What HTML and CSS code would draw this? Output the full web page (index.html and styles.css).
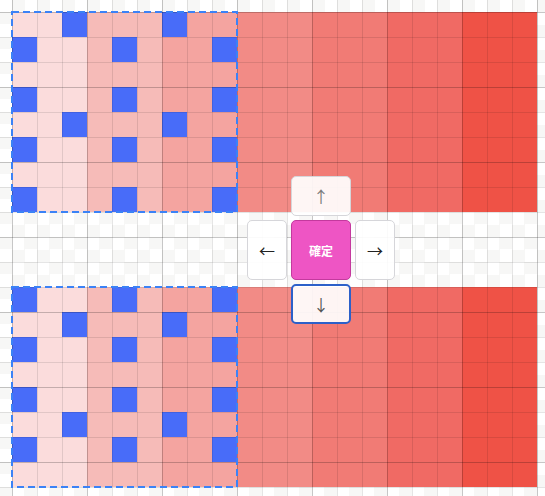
FILE: index.html
```html
<!DOCTYPE html>
<html lang="ja">
<head>
<meta charset="utf-8">
<title>Grid</title>
<link rel="stylesheet" href="styles.css">
</head>
<body>
<div class="canvas">
  <div class="block">
    <div class="b r1 k3"></div><div class="b r1 k7"></div>
    <div class="b r2 k1"></div><div class="b r2 k5"></div><div class="b r2 k9"></div>
    <div class="b r4 k1"></div><div class="b r4 k5"></div><div class="b r4 k9"></div>
    <div class="b r5 k3"></div><div class="b r5 k7"></div>
    <div class="b r6 k1"></div><div class="b r6 k5"></div><div class="b r6 k9"></div>
    <div class="b r8 k1"></div><div class="b r8 k5"></div><div class="b r8 k9"></div>
  </div>
  <div class="block">
    <div class="b r1 k1"></div><div class="b r1 k5"></div><div class="b r1 k9"></div>
    <div class="b r2 k3"></div><div class="b r2 k7"></div>
    <div class="b r3 k1"></div><div class="b r3 k5"></div><div class="b r3 k9"></div>
    <div class="b r5 k1"></div><div class="b r5 k5"></div><div class="b r5 k9"></div>
    <div class="b r6 k3"></div><div class="b r6 k7"></div>
    <div class="b r7 k1"></div><div class="b r7 k5"></div><div class="b r7 k9"></div>
  </div>
  <div class="lines"></div>
  <svg class="sel sel-top" width="227" height="202" viewBox="0 0 227 202"><rect x="1" y="1" width="225" height="200" fill="none" stroke="#3b82f6" stroke-width="2" stroke-dasharray="7 4"/></svg>
  <svg class="sel sel-bottom" width="227" height="202" viewBox="0 0 227 202"><rect x="1" y="1" width="225" height="200" fill="none" stroke="#3b82f6" stroke-width="2" stroke-dasharray="7 4"/></svg>
  <div class="dpad">
    <button class="key up"><span class="arrow">↑</span></button>
    <button class="key left"><span class="arrow">←</span></button>
    <button class="key ok">確定</button>
    <button class="key right"><span class="arrow">→</span></button>
    <button class="key down"><span class="arrow">↓</span></button>
  </div>
</div>
</body>
</html>
```
FILE: styles.css
```css
html, body {
  margin: 0;
  padding: 0;
}
body {
  width: 545px;
  height: 496px;
  overflow: hidden;
  font-family: "Noto Sans", "Noto Sans CJK JP", sans-serif;
}
.canvas {
  position: relative;
  width: 545px;
  height: 496px;
  box-sizing: border-box;
  padding: 12px 0 0 12px;
  display: flex;
  flex-direction: column;
  gap: 75px;
  background-color: #fff;
  background-image: conic-gradient(#f7f7f6 25%, #ffffff 0 50%, #f7f7f6 0 75%, #ffffff 0);
  background-size: 25px 25px;
  background-position: 12px 12px;
}
.block {
  display: grid;
  grid-template-columns: repeat(21, 25px);
  grid-template-rows: repeat(8, 25px);
  width: 525px;
  height: 200px;
  background: linear-gradient(to right,
    #fbdcdc 0 75px,
    #f6bbb8 75px 150px,
    #f4a4a0 150px 225px,
    #f28b86 225px 300px,
    #f17b75 300px 375px,
    #f06a64 375px 450px,
    #ef5246 450px 525px);
}
.b { background: #486cf9; }
.r1 { grid-row: 1; } .r2 { grid-row: 2; } .r3 { grid-row: 3; } .r4 { grid-row: 4; }
.r5 { grid-row: 5; } .r6 { grid-row: 6; } .r7 { grid-row: 7; } .r8 { grid-row: 8; }
.k1 { grid-column: 1; } .k3 { grid-column: 3; } .k5 { grid-column: 5; }
.k7 { grid-column: 7; } .k9 { grid-column: 9; }

.lines {
  position: absolute;
  inset: 0;
  pointer-events: none;
  background-image:
    linear-gradient(to right, rgba(0,0,0,.13) 1px, transparent 1px),
    linear-gradient(to bottom, rgba(0,0,0,.13) 1px, transparent 1px),
    linear-gradient(to right, rgba(0,0,0,.1) 1px, transparent 1px),
    linear-gradient(to bottom, rgba(0,0,0,.1) 1px, transparent 1px);
  background-size: 75px 75px, 75px 75px, 25px 25px, 25px 25px;
  background-position: 12px 12px;
}
.sel {
  position: absolute;
  left: 11px;
  display: block;
}
.sel-top { top: 11px; }
.sel-bottom { top: 286px; }

.dpad {
  position: absolute;
  left: 247px;
  top: 176px;
  display: grid;
  grid-template-columns: 40px 60px 40px;
  grid-template-rows: 40px 60px 40px;
  gap: 4px;
}
.key {
  margin: 0;
  padding: 0;
  box-sizing: border-box;
  border: 1px solid #d6d6da;
  border-radius: 5px;
  background: rgba(255,255,255,.92);
  display: flex;
  align-items: center;
  justify-content: center;
  font-family: "Noto Sans CJK JP", sans-serif;
  font-size: 16px;
  color: #222;
}
.arrow { line-height: 1; }
.up { grid-column: 2; grid-row: 1; color: #7a7a7a; }
.left { grid-column: 1; grid-row: 2; }
.ok {
  grid-column: 2;
  grid-row: 2;
  background: #ee55c4;
  border-color: #c4399e;
  color: #fff;
  font-family: "Noto Sans CJK JP", sans-serif;
  font-weight: 700;
  font-size: 12px;
}
.right { grid-column: 3; grid-row: 2; }
.down {
  grid-column: 2;
  grid-row: 3;
  border: 2px solid #2c60c9;
  color: #555;
}
```
